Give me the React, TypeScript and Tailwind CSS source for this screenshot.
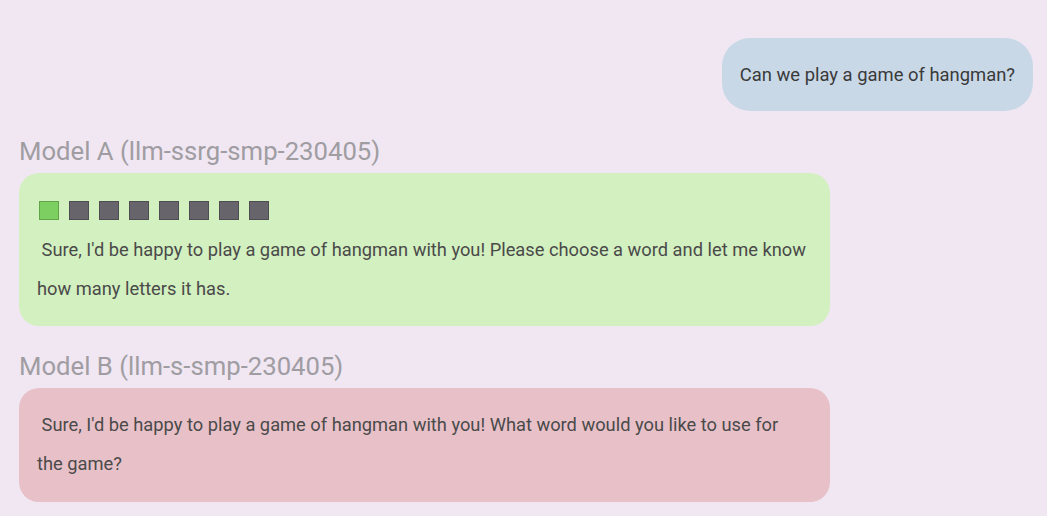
const squares = [true, false, false, false, false, false, false, false];

export default function App() {
  return (
    <div
      className="min-h-screen w-full bg-[#f0e7f3] px-[19px] pt-[38px]"
      style={{ fontFamily: "Roboto, 'Liberation Sans', sans-serif" }}
    >
      <div className="flex justify-end">
        <div className="mr-[-5px] flex h-[73px] items-center rounded-[28px] bg-[#c9d8e7] px-[18px] text-[18.4px] text-[#3a3a3a]">
          Can we play a game of hangman?
        </div>
      </div>

      <div className="mt-[25px] h-[37px] text-[25.7px] leading-[30px] text-[#a09da2]">
        Model A (llm-ssrg-smp-230405)
      </div>
      <div className="w-[811px] rounded-[20px] bg-[#d3f0c0] pb-[18px] pl-[18px] pr-[10px] pt-[28px]">
        <div className="ml-[2px] flex gap-[10px]">
          {squares.map((on, i) => (
            <div
              key={i}
              className={
                on
                  ? "h-[19px] w-[20px] border border-[#5ea646] bg-[#7ecf62]"
                  : "h-[19px] w-[20px] border border-[#4f4d52] bg-[#67656b]"
              }
            />
          ))}
        </div>
        <p className="mt-[10px] text-[18.3px] leading-[39px] text-[#4a4a4a]">
          &nbsp;Sure, I'd be happy to play a game of hangman with you! Please choose a word and let me know
          <br />
          how many letters it has.
        </p>
      </div>

      <div className="mt-[25px] h-[37px] text-[25.7px] leading-[30px] text-[#a09da2]">
        Model B (llm-s-smp-230405)
      </div>
      <div className="w-[811px] rounded-[20px] bg-[#e8c1c8] pb-[19px] pl-[18px] pr-[10px] pt-[17px]">
        <p className="text-[18.3px] leading-[39px] text-[#4a4a4a]">
          &nbsp;Sure, I'd be happy to play a game of hangman with you! What word would you like to use for
          <br />
          the game?
        </p>
      </div>
    </div>
  );
}
